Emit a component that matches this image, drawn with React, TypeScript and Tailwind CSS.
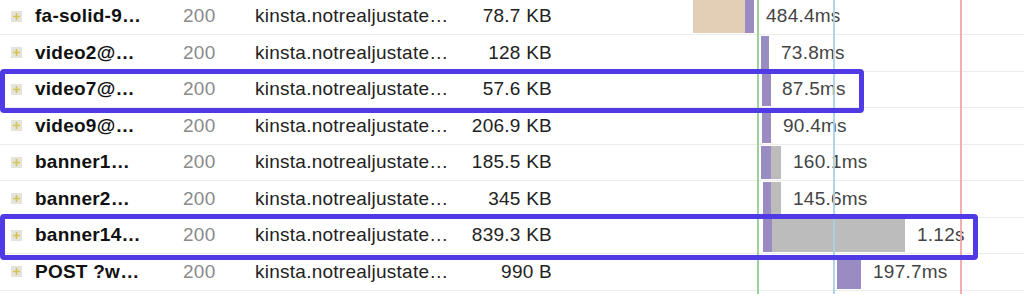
const purple = "bg-[#9a8cc2]";

type Bar = { left: number; width: number; color: string };
type Row = { name: string; size: string; time: string; timeLeft: number; bars: Bar[] };

// timeline starts at x=552, so bar offsets are page x - 552
const rows: Row[] = [
  { name: "fa-solid-9…", size: "78.7 KB", time: "484.4ms", timeLeft: 214, bars: [{ left: 141, width: 52, color: "bg-[#e2cfb6]" }, { left: 193, width: 9, color: purple }] },
  { name: "video2@…", size: "128 KB", time: "73.8ms", timeLeft: 229, bars: [{ left: 209, width: 8, color: purple }] },
  { name: "video7@…", size: "57.6 KB", time: "87.5ms", timeLeft: 230, bars: [{ left: 210, width: 9, color: purple }] },
  { name: "video9@…", size: "206.9 KB", time: "90.4ms", timeLeft: 231, bars: [{ left: 210, width: 9, color: purple }] },
  { name: "banner1…", size: "185.5 KB", time: "160.1ms", timeLeft: 241, bars: [{ left: 209, width: 10, color: purple }, { left: 219, width: 10, color: "bg-[#bcbcbc]" }] },
  { name: "banner2…", size: "345 KB", time: "145.6ms", timeLeft: 241, bars: [{ left: 211, width: 8, color: purple }, { left: 219, width: 10, color: "bg-[#bcbcbc]" }] },
  { name: "banner14…", size: "839.3 KB", time: "1.12s", timeLeft: 365, bars: [{ left: 211, width: 9, color: purple }, { left: 220, width: 133, color: "bg-[#bcbcbc]" }] },
  { name: "POST ?w…", size: "990 B", time: "197.7ms", timeLeft: 321, bars: [{ left: 285, width: 24, color: purple }] },
];

function PlusIcon() {
  return (
    <span className="flex h-[11px] w-[11px] items-center justify-center bg-[#e4e4dc]">
      <svg width="9" height="9" viewBox="0 0 9 9">
        <path d="M4.5 1v7M1 4.5h7" stroke="#d6c452" strokeWidth="1.6" />
      </svg>
    </span>
  );
}

export default function App() {
  return (
    <div
      className="relative h-[294px] w-[1024px] overflow-hidden bg-white text-[19px] tracking-[0.25px]"
      style={{ fontFamily: '"Liberation Sans", Arial, sans-serif' }}
    >
      <div className="-mt-[1.5px]">
        {rows.map((r) => (
          <div key={r.name} className="flex h-[36.5px] items-center border-b border-[#ececec]">
            <div className="flex w-[35px] pl-[11px]"><PlusIcon /></div>
            <div className="w-[148px] font-bold text-[#111]">{r.name}</div>
            <div className="w-[72px] text-[#8a8a8a]">200</div>
            <div className="w-[205px] whitespace-nowrap text-[#222]">kinsta.notrealjustate…</div>
            <div className="w-[92px] text-right text-[#222]">{r.size}</div>
            <div className="relative h-full flex-1">
              {r.bars.map((b, i) => (
                <div key={i} className={`absolute top-[1px] bottom-[1px] ${b.color}`} style={{ left: b.left, width: b.width }} />
              ))}
              <span className="absolute top-1/2 -translate-y-1/2 text-[#444]" style={{ left: r.timeLeft }}>{r.time}</span>
            </div>
          </div>
        ))}
      </div>

      {/* timeline markers */}
      <div className="absolute top-0 bottom-0 left-[757px] w-[2px] bg-[#9bd39b]" />
      <div className="absolute top-0 bottom-0 left-[833px] w-[2px] bg-[#a6d0e4]/90" />
      <div className="absolute top-0 bottom-0 left-[960px] w-[2px] bg-[#f2a6a6]/90" />

      {/* highlight boxes */}
      <div className="absolute left-0 top-[69px] h-[44px] w-[864px] rounded-[4px] border-[5px] border-[#4f3ae6]" />
      <div className="absolute left-0 top-[214px] h-[46px] w-[978px] rounded-[4px] border-[5px] border-[#4f3ae6]" />
    </div>
  );
}
